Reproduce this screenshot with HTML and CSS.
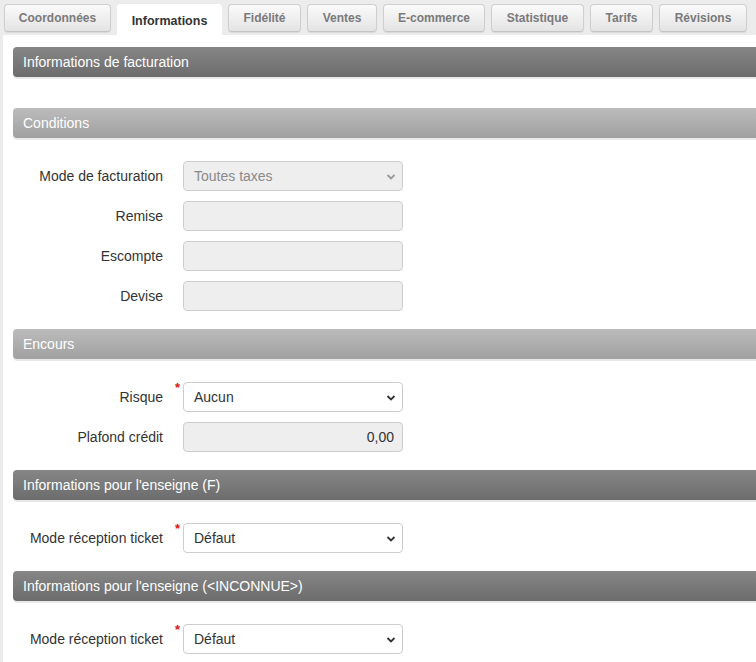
FILE: index.html
```html
<!DOCTYPE html>
<html lang="fr">
<head>
<meta charset="utf-8">
<title>Informations</title>
<link rel="stylesheet" href="styles.css">
</head>
<body>
<div class="tabs">
  <div class="tab t1">Coordonnées</div>
  <div class="tab active t2">Informations</div>
  <div class="tab t3">Fidélité</div>
  <div class="tab t4">Ventes</div>
  <div class="tab t5">E-commerce</div>
  <div class="tab t6">Statistique</div>
  <div class="tab t7">Tarifs</div>
  <div class="tab t8">Révisions</div>
</div>
<div class="panel">
  <div class="hdr dark first">Informations de facturation</div>

  <div class="hdr light">Conditions</div>
  <div class="fields">
    <div class="row">
      <label class="lbl">Mode de facturation</label>
      <div class="ctl disabled select muted">Toutes taxes<svg class="chev" width="10" height="6" viewBox="0 0 10 6"><polyline points="1.5,1 5,4.5 8.5,1" fill="none" stroke="#999" stroke-width="1.8"/></svg></div>
    </div>
    <div class="row"><label class="lbl">Remise</label><div class="ctl disabled"></div></div>
    <div class="row"><label class="lbl">Escompte</label><div class="ctl disabled"></div></div>
    <div class="row"><label class="lbl">Devise</label><div class="ctl disabled"></div></div>
  </div>

  <div class="hdr light">Encours</div>
  <div class="fields">
    <div class="row">
      <label class="lbl">Risque</label>
      <span class="req">*</span>
      <div class="ctl select">Aucun<svg class="chev" width="10" height="6" viewBox="0 0 10 6"><polyline points="1.5,1 5,4.5 8.5,1" fill="none" stroke="#333" stroke-width="1.8"/></svg></div>
    </div>
    <div class="row"><label class="lbl">Plafond crédit</label><div class="ctl disabled num">0,00</div></div>
  </div>

  <div class="hdr dark">Informations pour l'enseigne (F)</div>
  <div class="fields">
    <div class="row">
      <label class="lbl">Mode réception ticket</label>
      <span class="req">*</span>
      <div class="ctl select">Défaut<svg class="chev" width="10" height="6" viewBox="0 0 10 6"><polyline points="1.5,1 5,4.5 8.5,1" fill="none" stroke="#333" stroke-width="1.8"/></svg></div>
    </div>
  </div>

  <div class="hdr dark">Informations pour l'enseigne (&lt;INCONNUE&gt;)</div>
  <div class="fields">
    <div class="row">
      <label class="lbl">Mode réception ticket</label>
      <span class="req">*</span>
      <div class="ctl select">Défaut<svg class="chev" width="10" height="6" viewBox="0 0 10 6"><polyline points="1.5,1 5,4.5 8.5,1" fill="none" stroke="#333" stroke-width="1.8"/></svg></div>
    </div>
  </div>
</div>
</body>
</html>
```
FILE: styles.css
```css
* { box-sizing: border-box; }
html, body {
  margin: 0;
  height: 100%;
}
body {
  background: #ececec;
  font-family: "Liberation Sans", Arial, sans-serif;
  color: #333;
  overflow: hidden;
}
.tabs {
  display: flex;
  align-items: flex-start;
  padding: 4px 0 0 4px;
  height: 35px;
}
.tab {
  height: 28px;
  margin-right: 6px;
  border: 1px solid #cfcfcf;
  border-bottom-color: #c4c4c4;
  border-radius: 4px;
  background: linear-gradient(#fafafa, #e4e4e4);
  font-size: 12px;
  font-weight: bold;
  color: #7a7a7a;
  display: flex;
  align-items: center;
  justify-content: center;
  padding-bottom: 1px;
  box-shadow: 0 1px 1px rgba(0,0,0,0.08);
}
.tab.active {
  height: 31px;
  background: #fff;
  border: none;
  border-radius: 4px 4px 0 0;
  color: #333;
  padding-top: 4px;
  font-size: 12.5px;
  box-shadow: none;
}
.t1 { width: 107px; }
.t2 { width: 105px; margin-right: 6px; }
.t3 { width: 73px; }
.t4 { width: 70px; }
.t5 { width: 102px; }
.t6 { width: 93px; }
.t7 { width: 63px; }
.t8 { width: 88px; }

.panel {
  margin-left: 3px;
  background: #fff;
  padding-top: 12px;
  height: 700px;
  overflow: hidden;
}
.hdr {
  margin-left: 10px;
  margin-right: -10px;
  height: 30px;
  border-radius: 4px 0 0 4px;
  color: #fff;
  font-size: 14px;
  padding-left: 10px;
  display: flex;
  align-items: center;
  box-shadow: 0 2px 0 #e9e9e9;
}
.hdr.dark {
  background: linear-gradient(#868686, #6c6c6c);
}
.hdr.light {
  background: linear-gradient(#bcbcbc, #a0a0a0);
}
.hdr.first { margin-bottom: 31px; }

.fields {
  padding: 23px 0 18px;
  display: flex;
  flex-direction: column;
  gap: 10px;
}
.row {
  display: flex;
  align-items: center;
  position: relative;
}
.lbl {
  width: 160px;
  text-align: right;
  font-size: 14px;
  color: #333;
  margin-right: 20px;
}
.req {
  position: absolute;
  left: 172px;
  top: 0;
  color: #d11;
  font-size: 13px;
  font-weight: bold;
  line-height: 12px;
}
.ctl {
  width: 220px;
  height: 30px;
  border: 1px solid #cdcdcd;
  border-radius: 4px;
  background: #fff;
  font-size: 14px;
  color: #333;
  padding: 0 10px;
  display: flex;
  align-items: center;
  position: relative;
}
.ctl.disabled {
  background: #eee;
}
.ctl.muted { color: #8a8a8a; }
.ctl.num { justify-content: flex-end; padding-right: 8px; }
.chev {
  position: absolute;
  right: 6px;
  top: 12px;
}
```
